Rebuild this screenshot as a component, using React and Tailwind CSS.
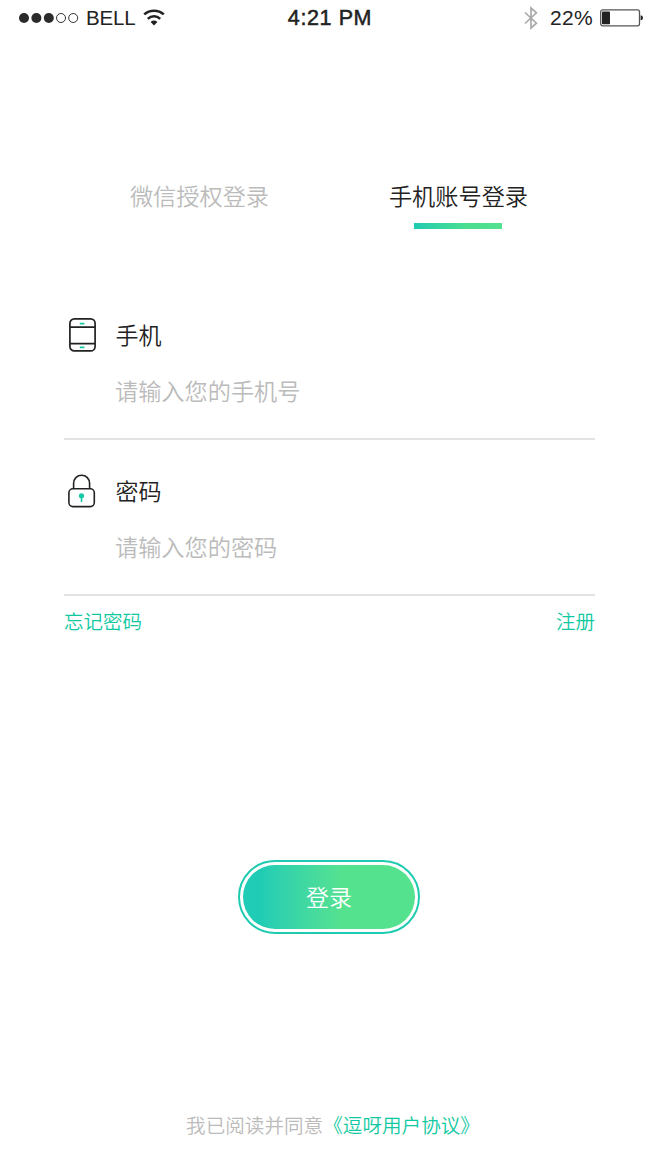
import { useState } from 'react';

function StatusBar() {
  return (
    <header className="grid h-9 grid-cols-3 items-center pl-[19px] pr-[15px] font-['Liberation_Sans'] text-[#222]">
      <div className="flex items-center">
        <svg width="60" height="12" viewBox="0 0 60 12" className="shrink-0">
          <circle cx="5" cy="6" r="5" fill="#2b2b2b" />
          <circle cx="17.4" cy="6" r="5" fill="#2b2b2b" />
          <circle cx="29.8" cy="6" r="5" fill="#2b2b2b" />
          <circle cx="42" cy="6" r="4.5" fill="none" stroke="#333" />
          <circle cx="54.2" cy="6" r="4.5" fill="none" stroke="#333" />
        </svg>
        <span className="ml-[7px] text-[20.5px] leading-6 tracking-[-0.2px]">BELL</span>
        <svg width="22" height="18" viewBox="0 0 22 18" className="ml-2 shrink-0" fill="none" stroke="#222" strokeWidth="2.5">
          <path d="M1.2 5.4C6.7 0.4 15.3 0.4 20.8 5.4" />
          <path d="M4.8 9.8C8.4 6.3 13.6 6.3 17.2 9.8" />
          <path d="M11 16.4L7.6 13Q11 10.2 14.4 13Z" fill="#222" stroke="none" />
        </svg>
      </div>
      <div className="-ml-0.5 whitespace-nowrap text-center text-[21.5px] leading-6 tracking-[0.6px] [-webkit-text-stroke:0.5px_#222]">
        4:21 PM
      </div>
      <div className="flex items-center justify-end">
        <svg width="14" height="24" viewBox="0 0 14 24" fill="none" stroke="#aaa" strokeWidth="1.7">
          <path d="M1 6.5L12.4 17.2L7 22V2L12.4 6.8L1 17.5" />
        </svg>
        <span className="ml-3 text-[21px] leading-6 tracking-[0.3px]">22%</span>
        <svg width="43" height="18" viewBox="0 0 43 18" className="ml-[7px] shrink-0">
          <rect x="0.7" y="0.8" width="38.8" height="16" rx="2" fill="none" stroke="#555" strokeWidth="1.3" />
          <rect x="2" y="2.6" width="8" height="12.6" rx="0.8" fill="#222" />
          <path d="M40.6 6.3Q43 6.3 43 8.8Q43 11.3 40.6 11.3Z" fill="#222" />
        </svg>
      </div>
    </header>
  );
}

function PhoneIcon() {
  return (
    <svg width="28" height="34" viewBox="0 0 28 34" fill="none" stroke="#222" strokeWidth="1.7">
      <rect x="1.9" y="0.9" width="25.2" height="32" rx="4.5" />
      <path d="M2 9.2H27M2 25.7H27" />
      <path d="M11.8 5.6H16.4M11.8 29.4H16.4" stroke="#16c9a5" strokeWidth="1.9" />
    </svg>
  );
}

function LockIcon() {
  return (
    <svg width="28" height="34" viewBox="0 0 28 34" fill="none" stroke="#222" strokeWidth="1.6">
      <rect x="0.9" y="14.8" width="25.4" height="17.8" rx="4" />
      <path d="M5.6 14.6V9.5C5.6 4.6 9 1.3 13.6 1.3S21.6 4.6 21.6 9.5V14.6" />
      <circle cx="13.5" cy="21.8" r="2.6" fill="#16c9a5" stroke="none" />
      <path d="M13.5 22V28" stroke="#16c9a5" strokeWidth="1.6" />
    </svg>
  );
}

function Field({ icon, label, type, placeholder, value, onChange }) {
  return (
    <label className="block border-b-2 border-[#e3e3e3] pb-[30px] pt-8">
      <span className="flex h-9 items-center">
        <span className="w-[51.5px] pl-1 pt-0.5">{icon}</span>
        <span className="text-[23px] leading-9 text-[#222]">{label}</span>
      </span>
      <input
        type={type}
        value={value}
        onChange={(e) => onChange(e.target.value)}
        placeholder={placeholder}
        className="mt-5 block h-9 w-full pl-[51px] text-[23.2px] text-[#222] outline-none placeholder:text-[#bbb]"
      />
    </label>
  );
}

export default function App() {
  const [tab, setTab] = useState('phone');
  const [phone, setPhone] = useState('');
  const [password, setPassword] = useState('');

  const tabs = [
    { id: 'wechat', label: '微信授权登录' },
    { id: 'phone', label: '手机账号登录' },
  ];

  return (
    <div className="flex h-[1170px] w-[658px] flex-col bg-white font-['Noto_Sans_CJK_SC',sans-serif] font-[350]">
      <StatusBar />

      <nav className="mt-[141px] flex h-[52px] justify-center gap-[119px]">
        {tabs.map((t) => (
          <button
            key={t.id}
            onClick={() => setTab(t.id)}
            className={`flex w-[140px] flex-col items-center whitespace-nowrap text-[23.2px] leading-9 ${
              tab === t.id ? 'text-[#222]' : 'text-[#bbb]'
            }`}
          >
            {t.label}
            {tab === t.id && (
              <span className="mr-px mt-[10px] h-1.5 w-[88px] bg-linear-to-r from-[#1dccb0] via-[#4ade90] via-60% to-[#53e18f]" />
            )}
          </button>
        ))}
      </nav>

      <main className="mx-16 mt-[55px] w-[531px]">
        <Field icon={<PhoneIcon />} label="手机" type="tel" placeholder="请输入您的手机号" value={phone} onChange={setPhone} />
        <Field icon={<LockIcon />} label="密码" type="password" placeholder="请输入您的密码" value={password} onChange={setPassword} />
        <div className="mt-2.5 flex justify-between text-[19.5px] leading-[30px] text-[#10c9a2]">
          <button>忘记密码</button>
          <button>注册</button>
        </div>
      </main>

      <button className="mt-[224px] h-[74px] w-[182px] self-center rounded-full border-2 border-[#1fcbb0] p-[3px]">
        <span className="flex h-full items-center justify-center rounded-full bg-linear-to-r from-[#20ccb5] from-10% to-[#55e28f] to-58% pb-0.5 text-[23px] text-white">
          登录
        </span>
      </button>

      <footer className="mt-auto flex justify-center whitespace-nowrap pb-[30px] pl-2 text-[19.6px] leading-[30px] text-[#bbb]">
        我已阅读并同意
        <button className="text-[#10c9a2]">《逗呀用户协议》</button>
      </footer>
    </div>
  );
}
